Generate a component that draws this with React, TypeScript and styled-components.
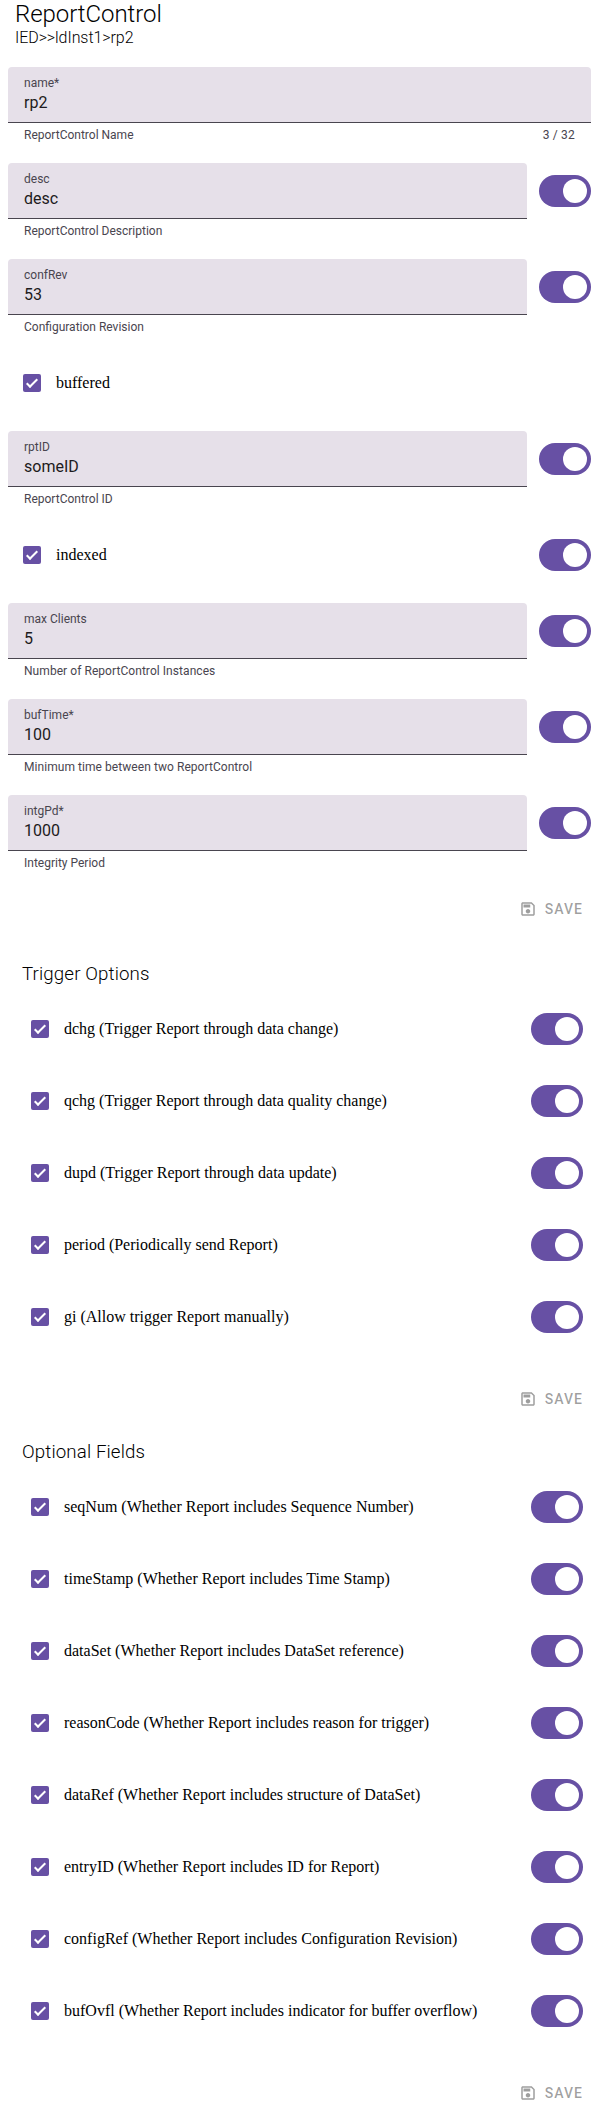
import React from 'react';
import styled, { createGlobalStyle } from 'styled-components';

const GlobalStyle = createGlobalStyle`
  body {
    margin: 0;
    background: #fff;
    color: #000;
  }
  * { box-sizing: border-box; }
`;

const Page = styled.main`
  width: 599px;
  height: 2127px;
  overflow: hidden;
  font-family: Roboto, 'Liberation Sans', sans-serif;
`;

const Header = styled.header`
  height: 67px;
  padding-left: 15px;
  font-weight: 300;
`;

const Title = styled.h2`
  margin: 0;
  font-size: 24px;
  line-height: 28px;
  font-weight: 300;
  letter-spacing: -0.05px;
`;

const Path = styled.div`
  font-size: 16px;
  line-height: 19px;
  letter-spacing: -0.07px;
`;

const Attributes = styled.section`
  display: flex;
  flex-direction: column;
  gap: 20px;
  padding: 0 8px;
`;

const Row = styled.div`
  display: flex;
  gap: 12px;
`;

const Field = styled.label`
  flex: 1;
  height: 76px;
`;

const FieldBox = styled.span`
  display: flex;
  flex-direction: column;
  height: 56px;
  padding: 8px 16px 7px;
  background: #e6e0e9;
  border-bottom: 1px solid #49454f;
  border-radius: 4px 4px 0 0;
`;

const FieldLabel = styled.span`
  font-size: 12px;
  line-height: 16px;
  color: #49454f;
`;

const FieldValue = styled.span`
  font-size: 16px;
  line-height: 24px;
  color: #1d1b20;
`;

const Support = styled.span`
  display: flex;
  justify-content: space-between;
  padding: 4px 16px 0;
  font-size: 12px;
  line-height: 16px;
  color: #49454f;
`;

const Help = styled.span<{ $tracking: number }>`
  letter-spacing: ${(p) => p.$tracking}px;
`;

const Counter = styled.span`
  letter-spacing: 0.2px;
`;

const SwitchSlot = styled.div`
  display: flex;
  align-items: center;
  height: 56px;
`;

const Track = styled.span`
  display: flex;
  justify-content: flex-end;
  width: 52px;
  height: 32px;
  padding: 4px;
  border-radius: 16px;
  background: #6750a4;
`;

const Handle = styled.span`
  width: 24px;
  height: 24px;
  border-radius: 50%;
  background: #fff;
`;

const CheckLabel = styled.label`
  flex: 1;
  display: flex;
  align-items: center;
  gap: 15px;
  height: 56px;
  padding-left: 15px;
  font-family: 'Liberation Serif', serif;
  font-size: 16px;
  line-height: 18px;
`;

const CheckText = styled.span`
  padding-bottom: 1px;
`;

const Box = styled.span`
  width: 18px;
  height: 18px;
  border-radius: 2px;
  background: #6750a4;
  svg { display: block; }
`;

const Group = styled.section`
  padding: 0 16px;
`;

const GroupTitle = styled.h3`
  height: 62px;
  margin: 0;
  padding: 24px 6px 0;
  font-size: 18.72px;
  line-height: 22px;
  font-weight: 300;
  letter-spacing: 0.12px;
`;

const GroupRows = styled.div`
  display: flex;
  flex-direction: column;
  gap: 16px;
`;

const Actions = styled.div<{ $top: number; $bottom: number }>`
  display: flex;
  justify-content: flex-end;
  padding: ${(p) => p.$top}px 16px ${(p) => p.$bottom}px;
`;

const SaveButton = styled.button`
  display: flex;
  align-items: center;
  gap: 8px;
  height: 36px;
  padding: 0;
  border: 0;
  background: none;
  font: 500 14px/36px Roboto, sans-serif;
  letter-spacing: 1px;
  color: rgba(0, 0, 0, 0.38);
  svg { display: block; fill: currentColor; }
`;

function Switch() {
  return (
    <SwitchSlot>
      <Track role="switch" aria-checked="true">
        <Handle />
      </Track>
    </SwitchSlot>
  );
}

type TextFieldProps = {
  label: string;
  value: string;
  help: string;
  tracking?: number;
  counter?: string;
  nullable?: boolean;
};

function TextField({ label, value, help, tracking = 0, counter, nullable = true }: TextFieldProps) {
  return (
    <Row>
      <Field>
        <FieldBox>
          <FieldLabel>{label}</FieldLabel>
          <FieldValue>{value}</FieldValue>
        </FieldBox>
        <Support>
          <Help $tracking={tracking}>{help}</Help>
          {counter && <Counter>{counter}</Counter>}
        </Support>
      </Field>
      {nullable && <Switch />}
    </Row>
  );
}

function Check({ label, nullable = true }: { label: string; nullable?: boolean }) {
  return (
    <Row>
      <CheckLabel>
        <Box>
          <svg width="18" height="18" viewBox="0 0 18 18" fill="#fff">
            <g transform="scale(1 -1) translate(7 -14) rotate(45)">
              <rect width="2" height="5.657" />
              <rect width="11.314" height="2" />
            </g>
          </svg>
        </Box>
        <CheckText>{label}</CheckText>
      </CheckLabel>
      {nullable && <Switch />}
    </Row>
  );
}

function Save({ top, bottom = 0 }: { top: number; bottom?: number }) {
  return (
    <Actions $top={top} $bottom={bottom}>
      <SaveButton disabled>
        <svg width="18" height="18" viewBox="0 0 24 24">
          <path d="M17 3H5c-1.11 0-2 .9-2 2v14c0 1.1.89 2 2 2h14c1.1 0 2-.9 2-2V7l-4-4zm2 16H5V5h11.17L19 7.83V19zm-7-7c-1.66 0-3 1.34-3 3s1.34 3 3 3 3-1.34 3-3-1.34-3-3-3zM6 6h9v4H6z" />
        </svg>
        SAVE
      </SaveButton>
    </Actions>
  );
}

const triggerOptions = [
  'dchg (Trigger Report through data change)',
  'qchg (Trigger Report through data quality change)',
  'dupd (Trigger Report through data update)',
  'period (Periodically send Report)',
  'gi (Allow trigger Report manually)',
];

const optionalFields = [
  'seqNum (Whether Report includes Sequence Number)',
  'timeStamp (Whether Report includes Time Stamp)',
  'dataSet (Whether Report includes DataSet reference)',
  'reasonCode (Whether Report includes reason for trigger)',
  'dataRef (Whether Report includes structure of DataSet)',
  'entryID (Whether Report includes ID for Report)',
  'configRef (Whether Report includes Configuration Revision)',
  'bufOvfl (Whether Report includes indicator for buffer overflow)',
];

function OptionGroup({ title, options }: { title: string; options: string[] }) {
  return (
    <Group>
      <GroupTitle>{title}</GroupTitle>
      <GroupRows>
        {options.map((o) => (
          <Check key={o} label={o} />
        ))}
      </GroupRows>
    </Group>
  );
}

export default function App() {
  return (
    <Page>
      <GlobalStyle />
      <Header>
        <Title>ReportControl</Title>
        <Path>IED&gt;&gt;ldInst1&gt;rp2</Path>
      </Header>
      <Attributes>
        <TextField label="name*" value="rp2" help="ReportControl Name" counter="3 / 32" nullable={false} />
        <TextField label="desc" value="desc" help="ReportControl Description" />
        <TextField label="confRev" value="53" help="Configuration Revision" />
        <Check label="buffered" nullable={false} />
        <TextField label="rptID" value="someID" help="ReportControl ID" />
        <Check label="indexed" />
        <TextField label="max Clients" value="5" help="Number of ReportControl Instances" tracking={0.06} />
        <TextField label="bufTime*" value="100" help="Minimum time between two ReportControl" tracking={0.06} />
        <TextField label="intgPd*" value="1000" help="Integrity Period" />
      </Attributes>
      <Save top={20} bottom={12} />
      <OptionGroup title="Trigger Options" options={triggerOptions} />
      <Save top={36} />
      <OptionGroup title="Optional Fields" options={optionalFields} />
      <Save top={36} />
    </Page>
  );
}
